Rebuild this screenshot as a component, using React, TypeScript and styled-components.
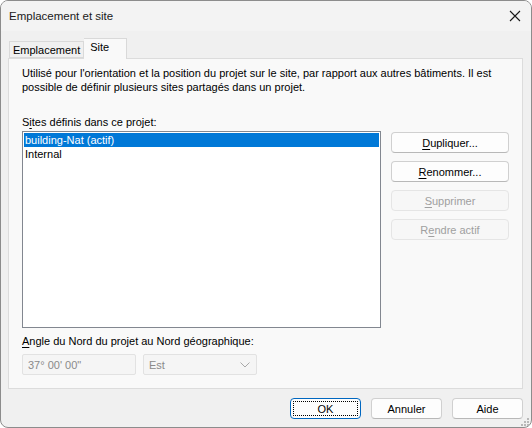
import React from 'react'
import styled, { createGlobalStyle } from 'styled-components'

const GlobalStyle = createGlobalStyle`
  html, body {
    margin: 0;
    padding: 0;
    background: #ffffff;
  }
  body {
    font-family: "Liberation Sans", Arial, sans-serif;
    font-size: 11px;
    color: #000;
  }
`

const Window = styled.div`
  width: 532px;
  height: 428px;
  box-sizing: border-box;
  border: 1px solid #8c8c8c;
  border-radius: 8px;
  background: #f0f0f0;
  display: flex;
  flex-direction: column;
  overflow: hidden;
`

const TitleBar = styled.div`
  height: 30px;
  display: flex;
  align-items: center;
  justify-content: space-between;
  padding: 0 0 0 8px;
  background: #f3f3f3;
`

const Title = styled.span`
  font-size: 11.5px;
  color: #1a1a1a;
`

const CloseButton = styled.div`
  width: 32px;
  height: 30px;
  display: flex;
  align-items: center;
  justify-content: center;
`

const Body = styled.div`
  flex: 1;
  display: flex;
  flex-direction: column;
  padding: 7px 8px 0 7px;
`

const TabRow = styled.div`
  display: flex;
  align-items: flex-end;
  height: 20px;
  padding-left: 1px;
  position: relative;
  z-index: 1;
`

const Tab = styled.div<{ $active?: boolean }>`
  box-sizing: border-box;
  height: ${p => (p.$active ? '21px' : '17px')};
  padding: ${p => (p.$active ? '0 17px 4px 6px' : '0 3px 0 3px')};
  margin-bottom: ${p => (p.$active ? '-1px' : '0')};
  display: flex;
  align-items: center;
  background: ${p => (p.$active ? '#f9f9f9' : '#f0f0f0')};
  border: 1px solid #d9d9d9;
  border-bottom: ${p => (p.$active ? 'none' : '1px solid #d9d9d9')};
  border-left: ${p => (p.$active ? 'none' : '1px solid #d9d9d9')};
  color: #000;
`

const Panel = styled.div`
  box-sizing: border-box;
  height: 331px;
  background: #f9f9f9;
  border: 1px solid #dcdcdc;
  padding: 7px 13px 0 13px;
  display: flex;
  flex-direction: column;
`

const Description = styled.p`
  margin: 0;
  line-height: 14px;
  color: #000;
`

const FieldLabel = styled.div<{ $top: number }>`
  margin-top: ${p => p.$top}px;
  line-height: 14px;
  height: 14px;
`

const SitesRow = styled.div`
  display: flex;
  margin-top: 2px;
  gap: 10px;
`

const ListBox = styled.div`
  box-sizing: border-box;
  width: 360px;
  height: 197px;
  background: #fff;
  border: 1px solid #828790;
  padding: 1px;
`

const ListItem = styled.div<{ $selected?: boolean }>`
  height: 14px;
  line-height: 14px;
  padding-left: 1px;
  background: ${p => (p.$selected ? '#0078d7' : 'transparent')};
  color: ${p => (p.$selected ? '#fff' : '#000')};
`

const ButtonColumn = styled.div`
  display: flex;
  flex-direction: column;
  gap: 8px;
  padding-top: 1px;
`

const Button = styled.div<{ $disabled?: boolean; $width?: number; $focused?: boolean }>`
  box-sizing: border-box;
  width: ${p => p.$width ?? 118}px;
  height: 21px;
  display: flex;
  align-items: center;
  justify-content: center;
  border-radius: 4px;
  background: ${p => (p.$disabled ? '#f7f7f7' : '#fdfdfd')};
  border: 1px solid ${p => (p.$focused ? '#0067c0' : p.$disabled ? '#e5e5e5' : '#d0d0d0')};
  border-bottom-color: ${p => (p.$focused ? '#0067c0' : p.$disabled ? '#e5e5e5' : '#b8b8b8')};
  color: ${p => (p.$disabled ? '#a0a0a0' : '#000')};
  position: relative;
`

const FocusRing = styled.span`
  position: absolute;
  inset: 2px;
  border: 1px dotted #000;
  border-radius: 1px;
`

const AngleRow = styled.div`
  display: flex;
  gap: 7px;
  margin-top: 6px;
`

const DisabledInput = styled.div<{ $width: number }>`
  box-sizing: border-box;
  width: ${p => p.$width}px;
  height: 21px;
  display: flex;
  align-items: center;
  justify-content: space-between;
  padding: 0 6px 0 5px;
  background: #f5f5f5;
  border: 1px solid #e2e2e2;
  border-radius: 2px;
  color: #8a8a8a;
`

const Footer = styled.div`
  flex: 1;
  display: flex;
  justify-content: flex-end;
  align-items: flex-start;
  gap: 10px;
  padding: 9px 0 0 0;
  position: relative;
`

const Grip = styled.svg`
  position: absolute;
  right: -6px;
  bottom: 1px;
`

const U = styled.u`
  text-decoration-thickness: 1px;
  text-underline-offset: 2px;
`

export default function App() {
  return (
    <>
      <GlobalStyle />
      <Window>
        <TitleBar>
          <Title>Emplacement et site</Title>
          <CloseButton>
            <svg width="12" height="12" viewBox="0 0 12 12">
              <path d="M1 1 L11 11 M11 1 L1 11" stroke="#1a1a1a" strokeWidth="1.1" fill="none" />
            </svg>
          </CloseButton>
        </TitleBar>
        <Body>
          <TabRow>
            <Tab>Emplacement</Tab>
            <Tab $active>Site</Tab>
          </TabRow>
          <Panel>
            <Description>
              Utilisé pour l'orientation et la position du projet sur le site, par rapport aux autres bâtiments. Il est
              possible de définir plusieurs sites partagés dans un projet.
            </Description>
            <FieldLabel $top={21}>
              S<U>i</U>tes définis dans ce projet:
            </FieldLabel>
            <SitesRow>
              <ListBox>
                <ListItem $selected>building-Nat (actif)</ListItem>
                <ListItem>Internal</ListItem>
              </ListBox>
              <ButtonColumn>
                <Button><span><U>D</U>upliquer...</span></Button>
                <Button><span><U>R</U>enommer...</span></Button>
                <Button $disabled><span><U>S</U>upprimer</span></Button>
                <Button $disabled><span>R<U>e</U>ndre actif</span></Button>
              </ButtonColumn>
            </SitesRow>
            <FieldLabel $top={6}>
              <U>A</U>ngle du Nord du projet au Nord géographique:
            </FieldLabel>
            <AngleRow>
              <DisabledInput $width={114}>37° 00' 00"</DisabledInput>
              <DisabledInput $width={114}>
                <span>Est</span>
                <svg width="10" height="6" viewBox="0 0 10 6">
                  <path d="M0.5 0.5 L5 5 L9.5 0.5" stroke="#a8a8a8" strokeWidth="1" fill="none" />
                </svg>
              </DisabledInput>
            </AngleRow>
          </Panel>
          <Footer>
            <Button $width={71} $focused><FocusRing />OK</Button>
            <Button $width={71}>Annuler</Button>
            <Button $width={71}>Aide</Button>
            <Grip width="10" height="10" viewBox="0 0 10 10">
              <rect x="8" y="2" width="2" height="2" fill="#b8b8b8" />
              <rect x="5" y="5" width="2" height="2" fill="#b8b8b8" />
              <rect x="8" y="5" width="2" height="2" fill="#b8b8b8" />
              <rect x="2" y="8" width="2" height="2" fill="#b8b8b8" />
              <rect x="5" y="8" width="2" height="2" fill="#b8b8b8" />
              <rect x="8" y="8" width="2" height="2" fill="#b8b8b8" />
            </Grip>
          </Footer>
        </Body>
      </Window>
    </>
  )
}
